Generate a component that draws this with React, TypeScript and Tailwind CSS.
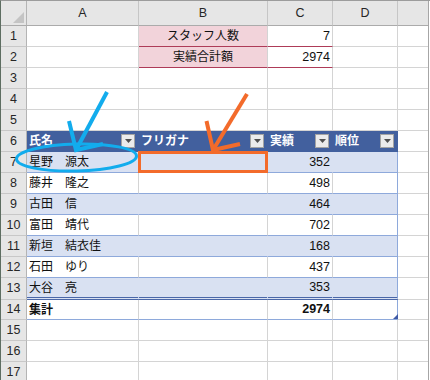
import type { ReactNode } from 'react';

const members: [string, string][] = [
  ['星野　源太', '352'],
  ['藤井　隆之', '498'],
  ['古田　信', '464'],
  ['富田　靖代', '702'],
  ['新垣　結衣佳', '168'],
  ['石田　ゆり', '437'],
  ['大谷　亮', '353'],
];

const font = { fontFamily: '"Liberation Sans", "Noto Sans CJK JP", sans-serif' };

function Cell({ className = '', children }: { className?: string; children?: ReactNode }) {
  return (
    <div className={`flex items-center overflow-hidden whitespace-nowrap border-r border-b ${className}`}>
      {children}
    </div>
  );
}

function RowHead({ n, className = 'h-[21px]' }: { n: number; className?: string }) {
  return (
    <div
      className={`flex items-center justify-center bg-[#e6e6e6] border-r border-b border-r-[#b4b4b4] border-b-[#c8c8c8] text-[12.5px] text-[#262626] ${className}`}
    >
      {n}
    </div>
  );
}

function ColHead({ label }: { label?: string }) {
  return (
    <div className="h-[25px] flex items-center justify-center bg-[#e6e6e6] border-r border-b border-r-[#c6c6c6] border-b-[#ababab] text-[12.5px] text-[#262626]">
      {label}
    </div>
  );
}

// plain empty cell with default grid lines
function Blank({ className = 'h-[21px]' }: { className?: string }) {
  return <Cell className={`border-[#d4d4d4] ${className}`} />;
}

function FilterButton() {
  return (
    <span className="w-[14px] h-[14px] shrink-0 flex items-center justify-center bg-[#ebebeb] border border-[#a3a3a3]">
      <svg width="7" height="4" viewBox="0 0 7 4">
        <polygon points="0,0 7,0 3.5,4" fill="#505050" />
      </svg>
    </span>
  );
}

function TableHead({ label }: { label: string }) {
  return (
    <Cell className="h-[21px] justify-between pl-[2px] pr-[3px] bg-[#42609e] border-[#42609e] text-white font-bold text-[12px]">
      <span>{label}</span>
      <FilterButton />
    </Cell>
  );
}

export default function App() {
  return (
    <div
      className="relative w-[430px] h-[380px] overflow-hidden bg-white border-t border-t-[#9c9c9c] border-l border-l-[#5e6e62] flex"
      style={font}
    >
      <div className="w-[427px] h-full overflow-hidden">
        <div className="grid grid-cols-[26px_112px_129px_65px_65px_64px] text-[#111]">
          {/* column letters */}
          <div className="h-[25px] flex items-end justify-end pr-[2px] pb-[2px] bg-[#e6e6e6] border-r border-b border-r-[#b4b4b4] border-b-[#ababab]">
            <svg width="11" height="11" viewBox="0 0 11 11">
              <polygon points="11,0 11,11 0,11" fill="#c4c4c4" />
            </svg>
          </div>
          <ColHead label="A" />
          <ColHead label="B" />
          <ColHead label="C" />
          <ColHead label="D" />
          <ColHead />

          {/* summary block */}
          <RowHead n={1} />
          <Blank />
          <Cell className="h-[21px] justify-center bg-[#f2d3da] border-r-[#d4d4d4] border-b-[#ae3b58] text-[12px]">
            スタッフ人数
          </Cell>
          <Cell className="h-[21px] justify-end pr-[2px] border-r-[#d4d4d4] border-b-[#ae3b58] text-[12.5px]">7</Cell>
          <Blank />
          <Blank />

          <RowHead n={2} />
          <Blank />
          <Cell className="h-[21px] justify-center bg-[#f2d3da] border-r-[#d4d4d4] border-b-[#ae3b58] text-[12px]">
            実績合計額
          </Cell>
          <Cell className="h-[21px] justify-end pr-[2px] border-r-[#d4d4d4] border-b-[#ae3b58] text-[12.5px]">2974</Cell>
          <Blank />
          <Blank />

          {[3, 4, 5].map((n) => (
            <div key={n} className="contents">
              <RowHead n={n} />
              <Blank />
              <Blank />
              <Blank />
              <Blank />
              <Blank />
            </div>
          ))}

          {/* staff table */}
          <RowHead n={6} />
          <TableHead label="氏名" />
          <TableHead label="フリガナ" />
          <TableHead label="実績" />
          <TableHead label="順位" />
          <Blank />

          {members.map(([name, score], i) => {
            const band = i % 2 === 0;
            const last = i === members.length - 1;
            const h = last ? 'h-[22px]' : 'h-[21px]';
            const bottom = last
              ? 'border-b-[3px] [border-bottom-style:double] border-b-[#4a67a8]'
              : 'border-b-[#8ea9db]';
            const fill = band ? 'bg-[#d9e1f2] border-r-[#d9e1f2]' : 'border-r-[#d4d4d4]';
            return (
              <div key={name} className="contents">
                <RowHead n={7 + i} className={h} />
                <Cell className={`${h} pl-[2px] text-[12px] ${fill} ${bottom}`}>{name}</Cell>
                <Cell className={`${h} ${fill} ${bottom}`} />
                <Cell className={`${h} justify-end pr-[2px] text-[12.5px] ${fill} ${bottom}`}>{score}</Cell>
                <Cell className={`${h} ${band ? 'bg-[#d9e1f2]' : ''} border-r-[#8ea9db] ${bottom}`} />
                <Blank className={h} />
              </div>
            );
          })}

          <RowHead n={14} className="h-[20px]" />
          <Cell className="h-[20px] pl-[2px] font-bold text-[12px] border-r-[#d4d4d4] border-b-[#8ea9db]">集計</Cell>
          <Cell className="h-[20px] border-r-[#d4d4d4] border-b-[#8ea9db]" />
          <Cell className="h-[20px] justify-end pr-[2px] font-bold text-[12.5px] border-r-[#d4d4d4] border-b-[#8ea9db]">
            2974
          </Cell>
          <Cell className="h-[20px] border-r-[#8ea9db] border-b-[#8ea9db]" />
          <Blank className="h-[20px]" />

          {[15, 16, 17].map((n) => (
            <div key={n} className="contents">
              <RowHead n={n} />
              <Blank />
              <Blank />
              <Blank />
              <Blank />
              <Blank />
            </div>
          ))}
        </div>
      </div>
      <div className="w-px h-full bg-[#a6a6a6]" />

      {/* drawn callouts over the sheet */}
      <svg
        className="absolute left-[-1px] top-[-1px] pointer-events-none"
        width="430"
        height="380"
        viewBox="0 0 430 380"
      >
        <polygon points="393,319 398,319 398,314" fill="#3f5aa6" />
        <ellipse cx="76.5" cy="157.5" rx="60" ry="13.5" transform="rotate(-1.5 76.5 157.5)" fill="none" stroke="#12aced" strokeWidth="3" />
        <path d="M107 92 L76 150" stroke="#12aced" strokeWidth="4" fill="none" />
        <path d="M69 121 L76 150 L103 144" stroke="#12aced" strokeWidth="4" fill="none" strokeLinejoin="miter" />
        <rect x="139.5" y="152.5" width="127" height="19" fill="none" stroke="#f36b2b" strokeWidth="3" />
        <path d="M247 94 L213 150" stroke="#f36b2b" strokeWidth="4" fill="none" />
        <path d="M206.5 121 L213 150 L240 144" stroke="#f36b2b" strokeWidth="4" fill="none" strokeLinejoin="miter" />
      </svg>
    </div>
  );
}
